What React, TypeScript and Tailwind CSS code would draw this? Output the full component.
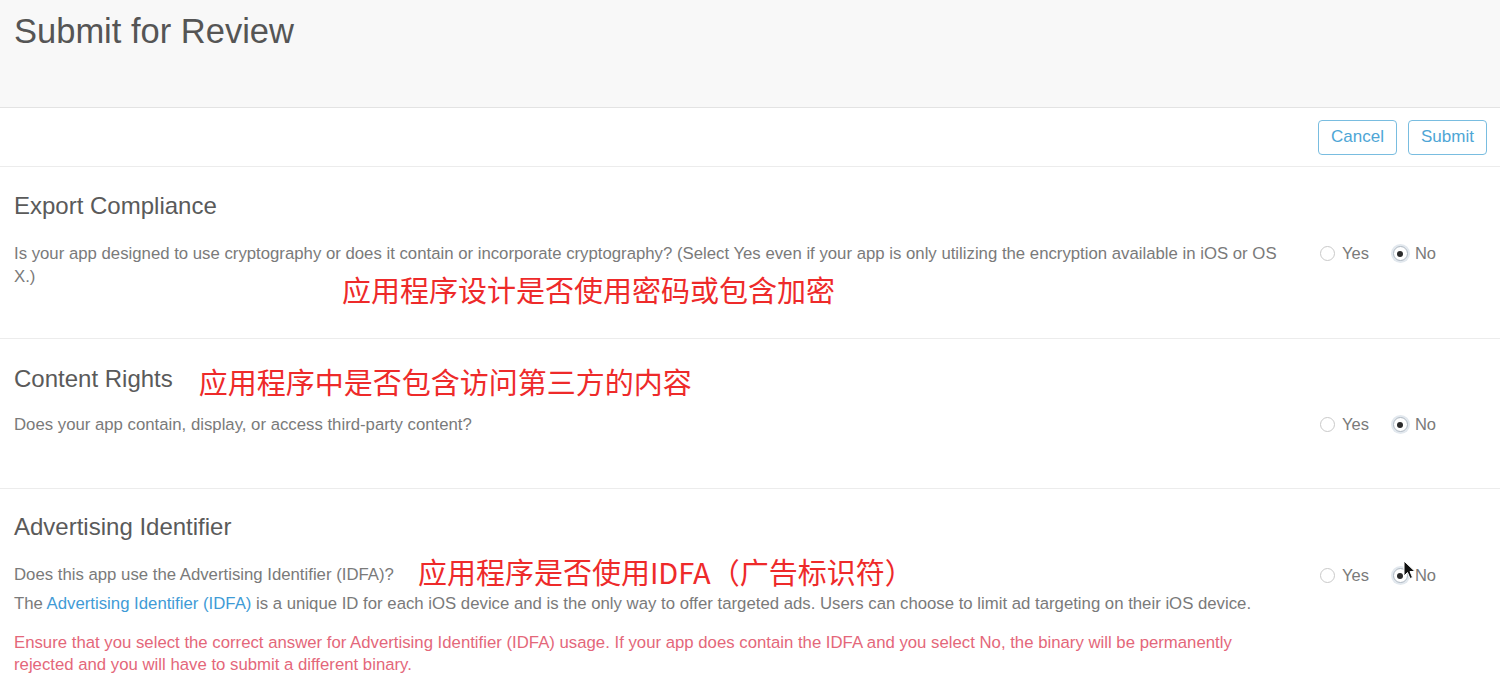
import React from "react";

const font = { fontFamily: '"Liberation Sans", "Noto Sans CJK SC", sans-serif' };

const Radio = ({ checked, label }: { checked?: boolean; label: string }) => {
  return (
    <div className="flex items-center gap-[7px]">
      {checked ? (
        <div className="w-[15px] h-[15px] rounded-full border border-[#aeb8c2] bg-white ring-2 ring-[#e2e8ee] flex items-center justify-center">
          <div className="w-[6px] h-[6px] rounded-full bg-[#2b2b2b]"></div>
        </div>
      ) : (
        <div className="w-[15px] h-[15px] rounded-full border border-[#c9c9c9] bg-white"></div>
      )}
      <span className="text-[16.5px] text-[#7a7a7a] leading-none">{label}</span>
    </div>
  );
};

const YesNo = () => {
  return (
    <div className="ml-[24px] flex items-center gap-[24px] h-[23px]">
      <Radio label="Yes" />
      <Radio checked label="No" />
    </div>
  );
};

const Note = ({ children, className }: { children: React.ReactNode; className?: string }) => {
  return (
    <span
      className={"text-[29px] leading-[34px] text-[#ee2a2a] " + (className ?? "")}
      style={{ fontFamily: '"Noto Sans CJK SC", "Liberation Sans", sans-serif' }}
    >
      {children}
    </span>
  );
};

export default function App() {
  return (
    <div className="w-[1500px] h-[698px] overflow-hidden bg-white relative" style={font}>
      <div className="h-[108px] bg-[#f8f8f8] border-b border-[#e3e3e3] px-[14px] pt-[9px]">
        <h1 className="text-[34.5px] leading-[44px] text-[#555555] font-light">Submit for Review</h1>
      </div>

      <div className="h-[59px] border-b border-[#ececec] flex items-center justify-end gap-[11px] pr-[13px]">
        <button className="w-[79px] h-[35px] rounded-[4px] border border-[#79bde0] text-[17px] text-[#4ea6d6] bg-white">
          Cancel
        </button>
        <button className="w-[79px] h-[35px] rounded-[4px] border border-[#79bde0] text-[17px] text-[#4ea6d6] bg-white">
          Submit
        </button>
      </div>

      <div className="h-[172px] border-b border-[#ececec] pl-[14px] pt-[22px]">
        <h2 className="text-[24px] leading-[34px] text-[#5a5a5a]">Export Compliance</h2>
        <div className="mt-[19px] flex items-start">
          <div className="w-[1282px]">
            <p className="text-[16.75px] leading-[23px] text-[#7a7a7a]">
              Is your app designed to use cryptography or does it contain or incorporate cryptography? (Select Yes even if your
              app is only utilizing the encryption available in iOS or OS X.)
            </p>
            <div className="ml-[328px] -mt-[16px]">
              <Note>应用程序设计是否使用密码或包含加密</Note>
            </div>
          </div>
          <YesNo />
        </div>
      </div>

      <div className="h-[150px] border-b border-[#ececec] pl-[14px] pt-[21px]">
        <div className="flex items-center">
          <h2 className="text-[24px] leading-[34px] text-[#5a5a5a]">Content Rights</h2>
          <Note className="ml-[26px] mt-[4px]">应用程序中是否包含访问第三方的内容</Note>
        </div>
        <div className="mt-[15px] flex items-start">
          <div className="w-[1282px]">
            <p className="text-[16.75px] leading-[23px] text-[#7a7a7a]">
              Does your app contain, display, or access third-party content?
            </p>
          </div>
          <YesNo />
        </div>
      </div>

      <div className="pl-[14px] pt-[21px]">
        <h2 className="text-[24px] leading-[34px] text-[#5a5a5a]">Advertising Identifier</h2>
        <div className="mt-[10px] flex items-start">
          <div className="w-[1282px]">
            <div className="flex items-center h-[34px]">
              <p className="text-[16.75px] leading-[23px] text-[#7a7a7a] mt-[6px]">
                Does this app use the Advertising Identifier (IDFA)?
              </p>
              <Note className="ml-[24px]">应用程序是否使用IDFA（广告标识符）</Note>
            </div>
            <p className="text-[16.75px] leading-[23px] text-[#7a7a7a] mt-[4px]">
              The <span className="text-[#3f9bd6]">Advertising Identifier (IDFA)</span> is a unique ID for each iOS device and is
              the only way to offer targeted ads. Users can choose to limit ad targeting on their iOS device.
            </p>
            <p className="mt-[17px] text-[16.75px] leading-[22px] text-[#e4677a] w-[1240px]">
              Ensure that you select the correct answer for Advertising Identifier (IDFA) usage. If your app does contain the IDFA
              and you select No, the binary will be permanently rejected and you will have to submit a different binary.
            </p>
          </div>
          <div className="mt-[10px]">
            <YesNo />
          </div>
        </div>
      </div>

      <svg className="absolute left-[1403px] top-[560px]" width="14" height="20" viewBox="0 0 14 20">
        <path d="M1 1 L1 16 L4.5 12.5 L7 18.5 L9.5 17.5 L7 11.5 L12 11.5 Z" fill="#111" stroke="#fff" strokeWidth="1" />
      </svg>
    </div>
  );
}
